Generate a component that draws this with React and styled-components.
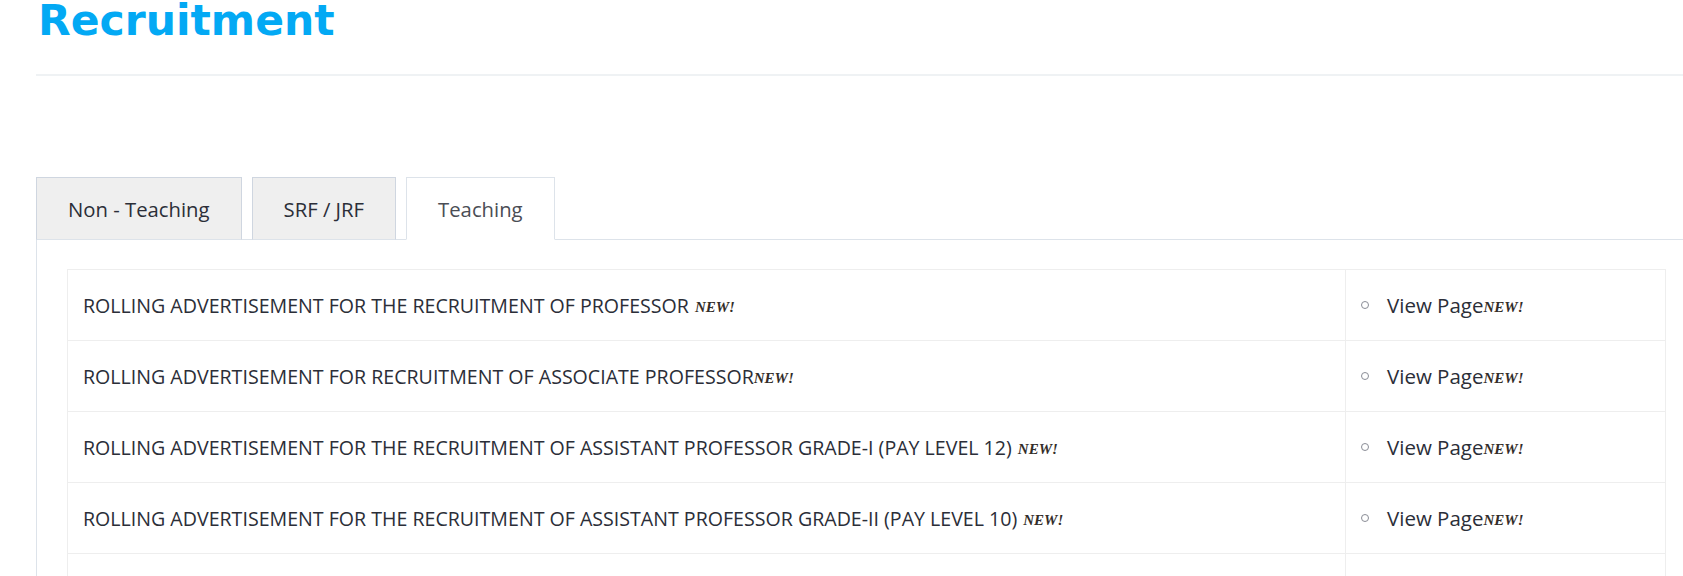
import React from 'react';
import styled, { createGlobalStyle } from 'styled-components';

const GlobalStyle = createGlobalStyle`
  html, body {
    margin: 0;
    padding: 0;
    background: #fff;
    overflow-x: hidden;
  }
  body {
    font-family: "Open Sans", "Noto Sans", sans-serif;
    color: #2b2b33;
  }
`;

const Page = styled.div`
  width: 1661px;
  padding-left: 36px;
`;

const Header = styled.div`
  padding-bottom: 32px;
  border-bottom: 2px solid #eff2f4;
`;

const Title = styled.h1`
  margin: 0 0 0 2px;
  font-family: "DejaVu Sans", sans-serif;
  font-weight: 700;
  font-size: 42.5px;
  line-height: 42px;
  color: #03a9f4;
`;

const TabBar = styled.div`
  display: flex;
  gap: 10px;
  margin-top: 101px;
  position: relative;
  z-index: 1;
`;

const Tab = styled.div`
  display: flex;
  align-items: center;
  height: 61px;
  padding: 0 31px;
  margin-bottom: -1px;
  border: 1px solid ${p => (p.$active ? '#dde3ea' : '#cfd6e0')};
  border-bottom-color: ${p => (p.$active ? '#fff' : '#dde3ea')};
  background: ${p => (p.$active ? '#fff' : '#efefef')};
  color: ${p => (p.$active ? '#4a4d55' : '#2b2e38')};
  font-size: 20.3px;
`;

const Panel = styled.div`
  border-left: 1px solid #dde3ea;
  border-top: 1px solid #dde3ea;
  padding: 29px 31px 0 30px;
`;

const Table = styled.table`
  width: 100%;
  border-collapse: collapse;
  border: 1px solid #eeeeee;
`;

const Cell = styled.td`
  height: 70px;
  padding: 0 15px;
  border: 1px solid #eeeeee;
  font-size: 19.6px;
  color: #2b2e38;
  width: ${p => p.$width || 'auto'};
  vertical-align: middle;
`;

const LinkItem = styled.div`
  display: flex;
  align-items: center;
  gap: 18px;
  font-size: 20.5px;
`;

const Bullet = styled.span`
  width: 6px;
  height: 6px;
  border: 1px solid #8a8d96;
  border-radius: 50%;
`;

const NewBadge = styled.span`
  display: inline-block;
  font-family: "Liberation Serif", serif;
  font-weight: 700;
  font-style: italic;
  font-size: 15px;
  color: #332d29;
  margin-left: ${p => (p.$gap ? '6px' : '0')};
  vertical-align: 1px;
`;

const rows = [
  { text: 'ROLLING ADVERTISEMENT FOR THE RECRUITMENT OF PROFESSOR', gap: true },
  { text: 'ROLLING ADVERTISEMENT FOR RECRUITMENT OF ASSOCIATE PROFESSOR', gap: false },
  { text: 'ROLLING ADVERTISEMENT FOR THE RECRUITMENT OF ASSISTANT PROFESSOR GRADE-I (PAY LEVEL 12)', gap: true },
  { text: 'ROLLING ADVERTISEMENT FOR THE RECRUITMENT OF ASSISTANT PROFESSOR GRADE-II (PAY LEVEL 10)', gap: true },
];

const tabs = ['Non - Teaching', 'SRF / JRF', 'Teaching'];

export default function App() {
  return (
    <Page>
      <GlobalStyle />
      <Header>
        <Title>Recruitment</Title>
      </Header>
      <TabBar>
        {tabs.map(t => (
          <Tab key={t} $active={t === 'Teaching'}>{t}</Tab>
        ))}
      </TabBar>
      <Panel>
        <Table>
          <tbody>
            {rows.map(r => (
              <tr key={r.text}>
                <Cell $width="1247px">
                  {r.text}
                  <NewBadge $gap={r.gap}>NEW!</NewBadge>
                </Cell>
                <Cell>
                  <LinkItem>
                    <Bullet />
                    <span>View Page<NewBadge>NEW!</NewBadge></span>
                  </LinkItem>
                </Cell>
              </tr>
            ))}
            <tr>
              <Cell $width="1247px">&nbsp;</Cell>
              <Cell>&nbsp;</Cell>
            </tr>
          </tbody>
        </Table>
      </Panel>
    </Page>
  );
}
